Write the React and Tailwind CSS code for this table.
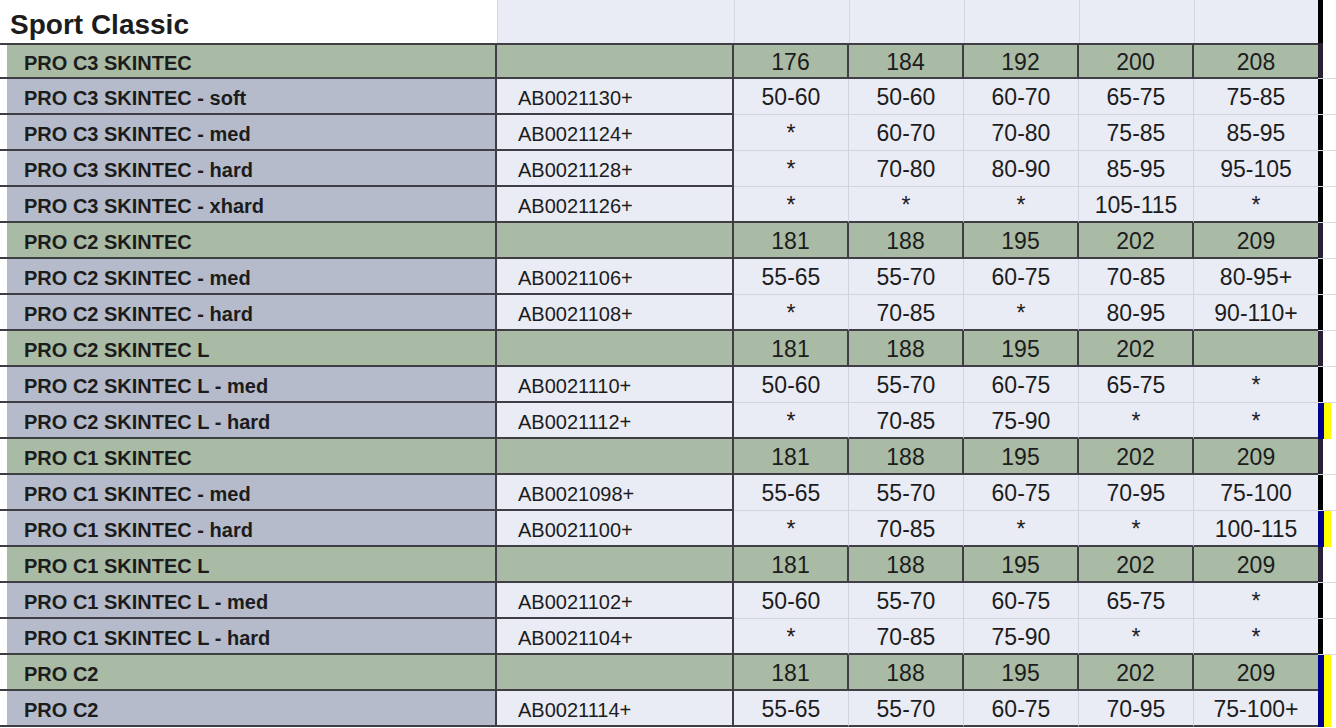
const rows = [
  { head: true, name: 'PRO C3 SKINTEC', vals: ['176', '184', '192', '200', '208'] },
  { name: 'PRO C3 SKINTEC - soft', code: 'AB0021130+', vals: ['50-60', '50-60', '60-70', '65-75', '75-85'] },
  { name: 'PRO C3 SKINTEC - med', code: 'AB0021124+', vals: ['*', '60-70', '70-80', '75-85', '85-95'] },
  { name: 'PRO C3 SKINTEC - hard', code: 'AB0021128+', vals: ['*', '70-80', '80-90', '85-95', '95-105'] },
  { name: 'PRO C3 SKINTEC - xhard', code: 'AB0021126+', vals: ['*', '*', '*', '105-115', '*'] },
  { head: true, name: 'PRO C2 SKINTEC', vals: ['181', '188', '195', '202', '209'] },
  { name: 'PRO C2 SKINTEC - med', code: 'AB0021106+', vals: ['55-65', '55-70', '60-75', '70-85', '80-95+'] },
  { name: 'PRO C2 SKINTEC - hard', code: 'AB0021108+', vals: ['*', '70-85', '*', '80-95', '90-110+'] },
  { head: true, name: 'PRO C2 SKINTEC L', vals: ['181', '188', '195', '202', ''] },
  { name: 'PRO C2 SKINTEC L - med', code: 'AB0021110+', vals: ['50-60', '55-70', '60-75', '65-75', '*'] },
  { name: 'PRO C2 SKINTEC L - hard', code: 'AB0021112+', vals: ['*', '70-85', '75-90', '*', '*'], mark: true },
  { head: true, name: 'PRO C1 SKINTEC', vals: ['181', '188', '195', '202', '209'] },
  { name: 'PRO C1 SKINTEC - med', code: 'AB0021098+', vals: ['55-65', '55-70', '60-75', '70-95', '75-100'] },
  { name: 'PRO C1 SKINTEC - hard', code: 'AB0021100+', vals: ['*', '70-85', '*', '*', '100-115'], mark: true },
  { head: true, name: 'PRO C1 SKINTEC L', vals: ['181', '188', '195', '202', '209'] },
  { name: 'PRO C1 SKINTEC L - med', code: 'AB0021102+', vals: ['50-60', '55-70', '60-75', '65-75', '*'] },
  { name: 'PRO C1 SKINTEC L - hard', code: 'AB0021104+', vals: ['*', '70-85', '75-90', '*', '*'] },
  { head: true, name: 'PRO C2', vals: ['181', '188', '195', '202', '209'], mark: true },
  { name: 'PRO C2', code: 'AB0021114+', vals: ['55-65', '55-70', '60-75', '70-95', '75-100+'], mark: true },
];

// right edge: thick black line, marked rows get blue + yellow
const Strip = ({ row }) => {
  if (row.mark) {
    return (
      <div className="flex h-full">
        <div className="w-[6px] bg-[#00008f]" />
        <div className="w-[7px] bg-[#ffff00]" />
      </div>
    );
  }
  return (
    <div className="flex h-full border-b border-[#d8dbe2]">
      <div className={row.head ? 'w-[5px] bg-[#2a2034]' : 'w-[5px] bg-black'} />
    </div>
  );
};

export default function App() {
  return (
    <div className="w-[1336px] h-[728px] overflow-hidden bg-white text-[#1c1c1c] font-['Liberation_Sans',Arial,sans-serif]">
      <div className="grid grid-cols-[7px_490px_237px_115px_115px_115px_115px_124px_18px] grid-rows-[43px_repeat(19,36px)]">
        {/* title row */}
        <div className="col-span-2 flex items-center pl-[10px] pt-[6px] text-[28px] font-bold leading-none">
          Sport Classic
        </div>
        {[0, 1, 2, 3, 4, 5].map((i) => (
          <div key={i} className="bg-[#e9ebf5] border-l border-[#d4d7e1]" />
        ))}
        <div className="flex h-full">
          <div className="w-[5px] bg-black" />
        </div>

        {rows.map((row, r) => {
          const next = rows[r + 1];
          const top = r === 0 ? 'border-t-2' : '';
          const darkBottom = !next || next.head;
          const fill = row.head ? 'bg-[#a9baa5]' : 'bg-[#b5bbca]';
          const valBg = row.head ? 'bg-[#a9baa5]' : 'bg-[#e9ebf5]';
          return [
            <div key={r + 'a'} className={`${top} border-b-2 border-[#3e3e44]`} />,
            <div
              key={r + 'n'}
              className={`${fill} ${top} border-b-2 border-r-2 border-[#3e3e44] flex items-center pl-[17px] pt-[3px] text-[20px] font-bold whitespace-nowrap`}
            >
              {row.name}
            </div>,
            <div
              key={r + 'c'}
              className={`${valBg} ${top} border-b-2 border-r-2 border-[#3e3e44] flex items-center pl-[21px] pt-[3px] text-[20px]`}
            >
              {row.code}
            </div>,
            ...row.vals.map((v, i) => {
              const last = i === row.vals.length - 1;
              let b;
              if (row.head) {
                b = `border-b-2 ${last ? '' : 'border-r-2'} border-[#3e3e44]`;
              } else if (darkBottom) {
                b = `border-b-2 border-b-[#3e3e44] ${last ? '' : 'border-r border-r-[#d0d4de]'}`;
              } else {
                b = `border-b border-b-[#d0d4de] ${last ? '' : 'border-r border-r-[#d0d4de]'}`;
              }
              return (
                <div
                  key={r + 'v' + i}
                  className={`${valBg} ${top} border-t-[#3e3e44] ${b} flex items-center justify-center pt-[2px] text-[23px]`}
                >
                  {v}
                </div>
              );
            }),
            <Strip key={r + 's'} row={row} />,
          ];
        })}
      </div>
    </div>
  );
}
